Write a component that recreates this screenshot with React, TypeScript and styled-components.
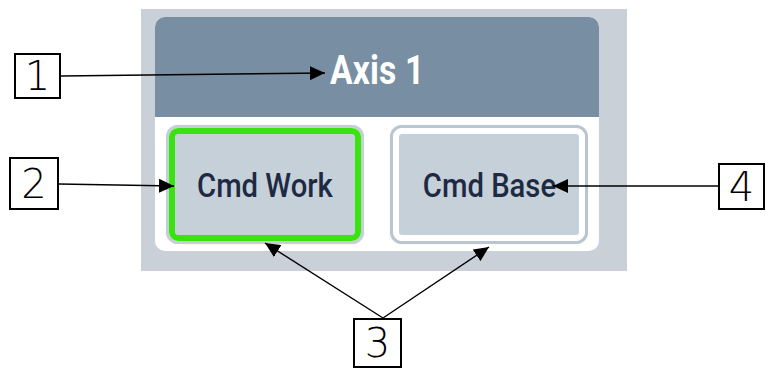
import React from 'react';
import styled, { createGlobalStyle } from 'styled-components';

const GlobalStyle = createGlobalStyle`
  html,
  body {
    margin: 0;
    padding: 0;
    background: #ffffff;
  }

  * {
    box-sizing: border-box;
  }
`;

const Stage = styled.div`
  position: relative;
  width: 766px;
  height: 369px;
  padding: 9px 0 0 141px;
  overflow: hidden;
  background: #ffffff;
`;

const Panel = styled.div`
  width: 486px;
  height: 262px;
  padding: 8px 0 0 14px;
  background-color: #c9d0d7;
`;

const Card = styled.div`
  display: flex;
  flex-direction: column;
  width: 444px;
  height: 234px;
  border-radius: 10px;
  overflow: hidden;
  background: #ffffff;
`;

const Header = styled.div`
  display: flex;
  align-items: center;
  justify-content: center;
  height: 100px;
  padding-top: 6px;
  background-color: #788ea2;
`;

const Title = styled.span`
  display: inline-block;
  transform: scaleX(0.84);
  color: #ffffff;
  font-family: Roboto, 'Liberation Sans', sans-serif;
  font-size: 40px;
  font-weight: 700;
  letter-spacing: 0.2px;
`;

const Body = styled.div`
  display: flex;
  flex: 1;
  gap: 26px;
  padding: 8px 11px 7px;
`;

const Ring = styled.div<{ $active?: boolean }>`
  display: flex;
  flex: 1;
  border: 3px solid ${p => (p.$active ? '#c6ced6' : '#b9c5cf')};
  border-radius: 12px;
  background: #ffffff;
  box-shadow: 0 0 1px #c9d3db;
`;

const Face = styled.button<{ $active?: boolean }>`
  display: flex;
  flex: 1;
  align-items: center;
  justify-content: center;
  padding: 0;
  border: 6px solid ${p => (p.$active ? '#38e30f' : '#ffffff')};
  border-radius: 9px;
  background-color: #c5d0d8;
  cursor: pointer;
`;

const FaceLabel = styled.span`
  display: inline-block;
  transform: scaleX(0.86);
  color: #1e2a44;
  font-family: Roboto, 'Liberation Sans', sans-serif;
  font-size: 34px;
  font-weight: 500;
  white-space: nowrap;
`;

const Overlay = styled.svg`
  position: absolute;
  top: 0;
  left: 0;
  pointer-events: none;
`;

const Callout = styled.div<{ $x: number; $y: number; $w: number; $h: number }>`
  position: absolute;
  left: ${p => p.$x}px;
  top: ${p => p.$y}px;
  width: ${p => p.$w}px;
  height: ${p => p.$h}px;
  display: flex;
  align-items: center;
  justify-content: center;
  border: 2px solid #000000;
  background: #ffffff;
  color: #000000;
  font-family: 'DejaVu Sans', sans-serif;
  font-size: 40px;
  font-weight: 300;
  line-height: 1;
`;

type Arrow = { x1: number; y1: number; x2: number; y2: number };

const arrows: Arrow[] = [
  { x1: 61, y1: 76, x2: 325, y2: 73 },
  { x1: 59, y1: 184, x2: 174, y2: 186 },
  { x1: 718, y1: 186, x2: 553, y2: 186 },
  { x1: 383, y1: 318, x2: 265, y2: 243 },
  { x1: 383, y1: 318, x2: 489, y2: 247 },
];

const callouts = [
  { n: '1', x: 14, y: 53, w: 47, h: 46 },
  { n: '2', x: 9, y: 157, w: 50, h: 53 },
  { n: '3', x: 353, y: 318, w: 49, h: 50 },
  { n: '4', x: 718, y: 163, w: 47, h: 47 },
];

const buttons = [
  { key: 'work', label: 'Cmd Work', active: true },
  { key: 'base', label: 'Cmd Base', active: false },
];

const App: React.FC = () => {
  return (
    <>
      <GlobalStyle />
      <Stage>
        <Panel>
          <Card>
            <Header>
              <Title>Axis 1</Title>
            </Header>
            <Body>
              {buttons.map(b => (
                <Ring key={b.key} $active={b.active}>
                  <Face $active={b.active}>
                    <FaceLabel>{b.label}</FaceLabel>
                  </Face>
                </Ring>
              ))}
            </Body>
          </Card>
        </Panel>

        <Overlay width={766} height={369} viewBox="0 0 766 369">
          <defs>
            <marker
              id="head"
              markerUnits="userSpaceOnUse"
              markerWidth={16}
              markerHeight={14}
              refX={15}
              refY={7}
              orient="auto"
            >
              <path d="M0,0 L15,7 L0,14 Z" fill="#000" />
            </marker>
          </defs>
          {arrows.map((a, i) => (
            <line
              key={i}
              x1={a.x1}
              y1={a.y1}
              x2={a.x2}
              y2={a.y2}
              stroke="#000"
              strokeWidth={1.4}
              markerEnd="url(#head)"
            />
          ))}
        </Overlay>

        {callouts.map(c => (
          <Callout key={c.n} $x={c.x} $y={c.y} $w={c.w} $h={c.h}>
            {c.n}
          </Callout>
        ))}
      </Stage>
    </>
  );
};

export default App;
